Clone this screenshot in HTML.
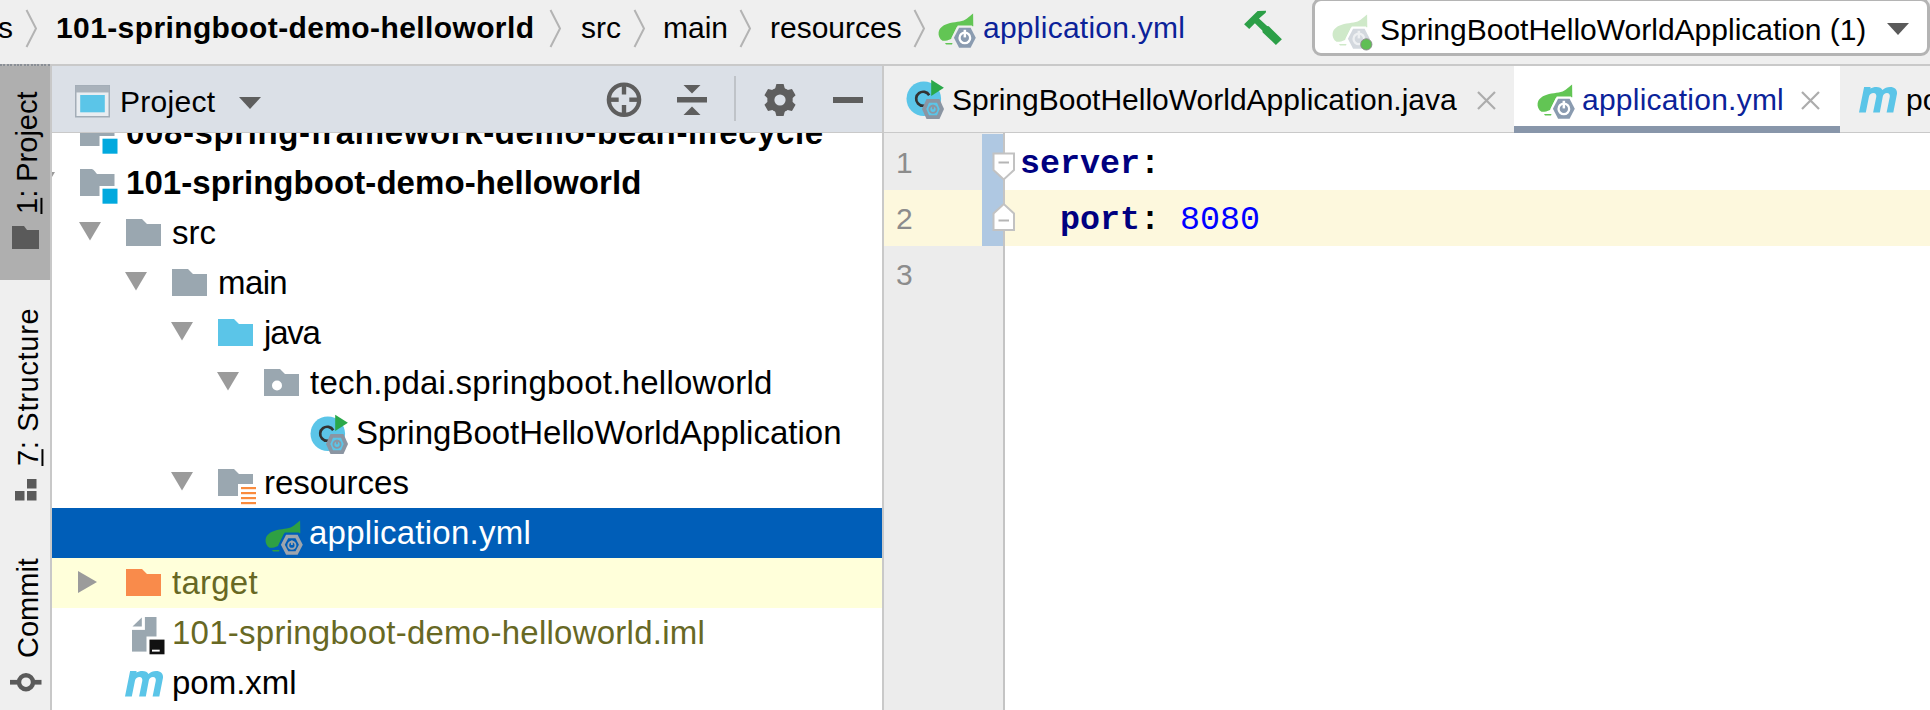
<!DOCTYPE html><html><head><meta charset="utf-8"><style>
html,body{margin:0;padding:0}
body{width:1930px;height:710px;overflow:hidden;position:relative;background:#fff;font-family:"Liberation Sans",sans-serif}
.t{position:absolute;white-space:nowrap}
.r{position:absolute}
.s{position:absolute;overflow:visible}
</style></head><body>
<div class="r" style="left:0px;top:0px;width:1930px;height:64px;background:#efefef;"></div>
<div class="r" style="left:0px;top:64px;width:1930px;height:2px;background:#c9c9c9;"></div>
<div class="t" style="left:-2px;top:12.80px;font-size:30px;line-height:30px;color:#000;font-weight:400;font-family:'Liberation Sans', sans-serif;">s</div>
<svg class="s" style="left:25px;top:9px;" width="13" height="40" viewBox="0 0 13 40"><path d="M1.5 1 L11 19.5 L1.5 38" fill="none" stroke="#b3b3b3" stroke-width="2"/></svg>
<div class="t" style="left:56px;top:12.80px;font-size:30px;line-height:30px;color:#000;font-weight:700;font-family:'Liberation Sans', sans-serif;letter-spacing:0.39px">101-springboot-demo-helloworld</div>
<svg class="s" style="left:549px;top:9px;" width="13" height="40" viewBox="0 0 13 40"><path d="M1.5 1 L11 19.5 L1.5 38" fill="none" stroke="#b3b3b3" stroke-width="2"/></svg>
<div class="t" style="left:581px;top:12.80px;font-size:30px;line-height:30px;color:#000;font-weight:400;font-family:'Liberation Sans', sans-serif;">src</div>
<svg class="s" style="left:633px;top:9px;" width="13" height="40" viewBox="0 0 13 40"><path d="M1.5 1 L11 19.5 L1.5 38" fill="none" stroke="#b3b3b3" stroke-width="2"/></svg>
<div class="t" style="left:663px;top:12.80px;font-size:30px;line-height:30px;color:#000;font-weight:400;font-family:'Liberation Sans', sans-serif;">main</div>
<svg class="s" style="left:739px;top:9px;" width="13" height="40" viewBox="0 0 13 40"><path d="M1.5 1 L11 19.5 L1.5 38" fill="none" stroke="#b3b3b3" stroke-width="2"/></svg>
<div class="t" style="left:770px;top:12.80px;font-size:30px;line-height:30px;color:#000;font-weight:400;font-family:'Liberation Sans', sans-serif;">resources</div>
<svg class="s" style="left:913px;top:9px;" width="13" height="40" viewBox="0 0 13 40"><path d="M1.5 1 L11 19.5 L1.5 38" fill="none" stroke="#b3b3b3" stroke-width="2"/></svg>
<svg class="s" style="left:938px;top:13px;" width="42" height="38" viewBox="0 0 42 38"><path d="M4.5 27.8 C1.5 26 0.2 22.5 0.6 19.5 C1.2 14.5 6 11.5 12 10 C19 8.5 25 8.8 29 5.5 C31.5 3.5 33.5 1.8 35.1 0.6 L35.3 13.3 L19 13.8 L13 26 C10 27.5 7 28 4.5 27.8 Z" fill="#62c554"/><path d="M7 30 H14.5 L14 31.6 H8 Z" fill="#62c554"/><path d="M13.6 24.75 L19.8 12.6 H33.9 L40.1 24.75 L33.9 36.9 H19.8 Z" fill="#efefef"/><path d="M15.9 24.75 L21.1 14.8 H32.6 L37.8 24.75 L32.6 34.7 H21.1 Z" fill="#8a9bb0"/><circle cx="26.85" cy="24.9" r="5.3" fill="none" stroke="#fff" stroke-width="2.3"/><rect x="25.6" y="16.8" width="2.5" height="7.6" fill="#fff"/></svg>
<div class="t" style="left:983px;top:12.80px;font-size:30px;line-height:30px;color:#0b2299;font-weight:400;font-family:'Liberation Sans', sans-serif;letter-spacing:0.25px">application.yml</div>
<svg class="s" style="left:1238px;top:4px;" width="46" height="44" viewBox="0 0 46 44"><path d="M6.1 20.3 L19.6 7.1 L28.1 6.8 L27.7 8.8 L21 14.5 L29.1 22 L30.8 22.3 L43.9 35.2 L37.9 40.9 L24.7 28.4 L24.3 26.4 L16.9 19.3 L11.2 25 Z" fill="#2c9f47"/></svg>
<div class="r" style="left:1312px;top:-2px;width:612px;height:52px;border:3px solid #b4b4b4;border-radius:9px;background:#fff"></div>
<svg class="s" style="left:1332px;top:13.5px;" width="42" height="38" viewBox="0 0 42 38"><path d="M4.5 27.8 C1.5 26 0.2 22.5 0.6 19.5 C1.2 14.5 6 11.5 12 10 C19 8.5 25 8.8 29 5.5 C31.5 3.5 33.5 1.8 35.1 0.6 L35.3 13.3 L19 13.8 L13 26 C10 27.5 7 28 4.5 27.8 Z" fill="#cfe9c9"/><path d="M7 30 H14.5 L14 31.6 H8 Z" fill="#cfe9c9"/><path d="M13.6 24.75 L19.8 12.6 H33.9 L40.1 24.75 L33.9 36.9 H19.8 Z" fill="#fff"/><path d="M15.9 24.75 L21.1 14.8 H32.6 L37.8 24.75 L32.6 34.7 H21.1 Z" fill="#d3d8de"/><circle cx="26.85" cy="24.9" r="5.3" fill="none" stroke="#eef0f2" stroke-width="2.3"/><rect x="25.6" y="16.8" width="2.5" height="7.6" fill="#eef0f2"/><circle cx="34.3" cy="30.4" r="5.6" fill="#5fbf55" stroke="#8c8c8c" stroke-width="1"/></svg>
<div class="t" style="left:1380px;top:14.90px;font-size:30px;line-height:30px;color:#000;font-weight:400;font-family:'Liberation Sans', sans-serif;">SpringBootHelloWorldApplication (1)</div>
<svg class="s" style="left:1887px;top:23px;" width="23" height="13" viewBox="0 0 23 13"><path d="M0 0 H22 L11 12 Z" fill="#5a5a5a"/></svg>
<div class="r" style="left:52px;top:558px;width:830px;height:50px;background:#ffffda;"></div>
<div class="r" style="left:52px;top:508px;width:830px;height:50px;background:#005eb8;"></div>
<svg class="s" style="left:80px;top:119px;" width="38" height="35" viewBox="0 0 38 35"><path d="M0 0 H11 C13 0 14 1 17 5 H34.5 V17 H19.5 V27 H0 Z" fill="#9aa7b0"/><rect x="22.5" y="19.7" width="15" height="15" fill="#01a9de"/></svg>
<div class="t" style="left:126px;top:116.06px;font-size:33px;line-height:33px;color:#000;font-weight:700;font-family:'Liberation Sans', sans-serif;letter-spacing:0.62px">008-spring-framework-demo-bean-lifecycle</div>
<svg class="s" style="left:33px;top:172px;" width="22" height="19" viewBox="0 0 22 19"><path d="M0 0 H22 L11.0 18.5 Z" fill="#9b9b9b"/></svg>
<svg class="s" style="left:80px;top:169px;" width="38" height="35" viewBox="0 0 38 35"><path d="M0 0 H11 C13 0 14 1 17 5 H34.5 V17 H19.5 V27 H0 Z" fill="#9aa7b0"/><rect x="22.5" y="19.7" width="15" height="15" fill="#01a9de"/></svg>
<div class="t" style="left:126px;top:166.06px;font-size:33px;line-height:33px;color:#000;font-weight:700;font-family:'Liberation Sans', sans-serif;letter-spacing:0.07px">101-springboot-demo-helloworld</div>
<svg class="s" style="left:79px;top:222px;" width="22" height="19" viewBox="0 0 22 19"><path d="M0 0 H22 L11.0 18.5 Z" fill="#9b9b9b"/></svg>
<svg class="s" style="left:126px;top:219px;" width="35" height="27" viewBox="0 0 35 27"><path d="M0 0 H16 L21 5 H35 V27 H0 Z" fill="#9aa7b0"/></svg>
<div class="t" style="left:172px;top:216.06px;font-size:33px;line-height:33px;color:#000;font-weight:400;font-family:'Liberation Sans', sans-serif;letter-spacing:0px">src</div>
<svg class="s" style="left:125px;top:272px;" width="22" height="19" viewBox="0 0 22 19"><path d="M0 0 H22 L11.0 18.5 Z" fill="#9b9b9b"/></svg>
<svg class="s" style="left:172px;top:269px;" width="35" height="27" viewBox="0 0 35 27"><path d="M0 0 H16 L21 5 H35 V27 H0 Z" fill="#9aa7b0"/></svg>
<div class="t" style="left:218px;top:266.06px;font-size:33px;line-height:33px;color:#000;font-weight:400;font-family:'Liberation Sans', sans-serif;letter-spacing:-0.6px">main</div>
<svg class="s" style="left:171px;top:322px;" width="22" height="19" viewBox="0 0 22 19"><path d="M0 0 H22 L11.0 18.5 Z" fill="#9b9b9b"/></svg>
<svg class="s" style="left:218px;top:319px;" width="35" height="27" viewBox="0 0 35 27"><path d="M0 0 H16 L21 5 H35 V27 H0 Z" fill="#5bc5e8"/></svg>
<div class="t" style="left:264px;top:316.06px;font-size:33px;line-height:33px;color:#000;font-weight:400;font-family:'Liberation Sans', sans-serif;letter-spacing:-1.2px">java</div>
<svg class="s" style="left:217px;top:372px;" width="22" height="19" viewBox="0 0 22 19"><path d="M0 0 H22 L11.0 18.5 Z" fill="#9b9b9b"/></svg>
<svg class="s" style="left:264px;top:369px;" width="35" height="27" viewBox="0 0 35 27"><path d="M0 0 H16 L21 5 H35 V27 H0 Z" fill="#9aa7b0"/><circle cx="13" cy="16.5" r="5" fill="#fff"/></svg>
<div class="t" style="left:310px;top:366.06px;font-size:33px;line-height:33px;color:#000;font-weight:400;font-family:'Liberation Sans', sans-serif;letter-spacing:0.25px">tech.pdai.springboot.helloworld</div>
<svg class="s" style="left:310px;top:415px;" width="40" height="41" viewBox="0 0 40 41"><circle cx="17.8" cy="18.8" r="17.3" fill="#5bc5e8"/><path d="M23.2 15.2 A7 7 0 1 0 22.4 23.4" fill="none" stroke="#333" stroke-width="2.7"/><path d="M25.2 -0.3 L37.9 7.8 L25.2 15.9 Z" fill="#2aa84a"/><path d="M16 29 L20.5 19 H33.5 L38 29 L33.5 39 H20.5 Z" fill="#8b95a2"/><path d="M20.3 29 L23 22.8 H31 L33.7 29 L31 35.2 H23 Z" fill="#5bc5e8"/><circle cx="27" cy="29.3" r="3.6" fill="none" stroke="#8b95a2" stroke-width="1.9"/><rect x="26.05" y="24.8" width="1.9" height="4.5" fill="#8b95a2"/></svg>
<div class="t" style="left:356px;top:416.06px;font-size:33px;line-height:33px;color:#000;font-weight:400;font-family:'Liberation Sans', sans-serif;letter-spacing:0px">SpringBootHelloWorldApplication</div>
<svg class="s" style="left:171px;top:472px;" width="22" height="19" viewBox="0 0 22 19"><path d="M0 0 H22 L11.0 18.5 Z" fill="#9b9b9b"/></svg>
<svg class="s" style="left:218px;top:469px;" width="39" height="36" viewBox="0 0 39 36"><path d="M0 0 H16 L21 5 H35 V15 H20 V27 H0 Z" fill="#9aa7b0"/><rect x="23" y="18" width="15" height="2.2" fill="#f98b3e"/><rect x="23" y="23" width="15" height="2.2" fill="#f98b3e"/><rect x="23" y="28" width="15" height="2.2" fill="#f98b3e"/><rect x="23" y="33" width="15" height="2.2" fill="#f98b3e"/></svg>
<div class="t" style="left:264px;top:466.06px;font-size:33px;line-height:33px;color:#000;font-weight:400;font-family:'Liberation Sans', sans-serif;letter-spacing:0px">resources</div>
<svg class="s" style="left:264.5px;top:519.5px;" width="42" height="38" viewBox="0 0 42 38"><path d="M4.5 27.8 C1.5 26 0.2 22.5 0.6 19.5 C1.2 14.5 6 11.5 12 10 C19 8.5 25 8.8 29 5.5 C31.5 3.5 33.5 1.8 35.1 0.6 L35.3 13.3 L19 13.8 L13 26 C10 27.5 7 28 4.5 27.8 Z" fill="#2ea043"/><path d="M7 30 H14.5 L14 31.6 H8 Z" fill="#2ea043"/><path d="M13.6 24.75 L19.8 12.6 H33.9 L40.1 24.75 L33.9 36.9 H19.8 Z" fill="#005eb8"/><path d="M15.9 24.75 L21.1 14.8 H32.6 L37.8 24.75 L32.6 34.7 H21.1 Z" fill="#9ea5ad"/><path d="M19.8 24.75 L23.2 18.3 H30.5 L33.9 24.75 L30.5 31.2 H23.2 Z" fill="#005eb8"/><circle cx="26.85" cy="25.2" r="3.6" fill="none" stroke="#9ea5ad" stroke-width="1.9"/><rect x="25.9" y="20.5" width="1.9" height="4.5" fill="#9ea5ad"/></svg>
<div class="t" style="left:309px;top:516.06px;font-size:33px;line-height:33px;color:#fff;font-weight:400;font-family:'Liberation Sans', sans-serif;letter-spacing:0.25px">application.yml</div>
<svg class="s" style="left:78px;top:571px;" width="19" height="22" viewBox="0 0 19 22"><path d="M0 0 L19 11.0 L0 22 Z" fill="#9b9b9b"/></svg>
<svg class="s" style="left:126px;top:569px;" width="35" height="27" viewBox="0 0 35 27"><path d="M0 0 H16 L21 5 H35 V27 H0 Z" fill="#f98b4b"/></svg>
<div class="t" style="left:172px;top:566.06px;font-size:33px;line-height:33px;color:#676824;font-weight:400;font-family:'Liberation Sans', sans-serif;letter-spacing:0.25px">target</div>
<svg class="s" style="left:131.5px;top:616.5px;" width="34" height="38" viewBox="0 0 34 38"><path d="M0.5 9.4 L9.8 0.5 V9.4 Z" fill="#9aa7b0"/><rect x="12.9" y="0" width="11.6" height="19.5" fill="#9aa7b0"/><rect x="0" y="12.9" width="14.5" height="21.7" fill="#9aa7b0"/><rect x="17.5" y="22.6" width="15" height="14.7" fill="#111"/><rect x="20" y="32.7" width="7.7" height="1.9" fill="#fff"/></svg>
<div class="t" style="left:172px;top:616.06px;font-size:33px;line-height:33px;color:#676824;font-weight:400;font-family:'Liberation Sans', sans-serif;letter-spacing:0.25px">101-springboot-demo-helloworld.iml</div>
<svg class="s" style="left:125px;top:671px;" width="39" height="27" viewBox="0 0 39 27"><path d="M0 25.6 L5.1 0 L11.6 0 L11.3 1.6 C13 0.5 15 0 17.3 0 C20.5 0 22.5 1.2 23.4 3 C25.5 1 28.2 0 31 0 C35.5 0 38.5 2.5 38 6.8 L34.3 25.6 L27.6 25.6 L30.8 9.8 C31.1 7.8 30 6.1 28 6.1 C25.8 6.1 24.3 7.5 23.8 9.5 L20.8 25.6 L14.1 25.6 L17.3 9.8 C17.6 7.8 16.5 6.1 14.5 6.1 C12.3 6.1 10.5 7.5 10 9.6 L6.8 25.6 Z" fill="#5bc5e8"/></svg>
<div class="t" style="left:172px;top:666.06px;font-size:33px;line-height:33px;color:#000;font-weight:400;font-family:'Liberation Sans', sans-serif;letter-spacing:0px">pom.xml</div>
<div class="r" style="left:0px;top:66px;width:50px;height:644px;background:#efefef;"></div>
<div class="r" style="left:0px;top:66px;width:50px;height:214px;background:#afafaf;"></div>
<div class="r" style="left:0;top:64px;width:50px;height:2px;background:repeating-linear-gradient(90deg,#8a8f96 0 2px,#b5b5b5 2px 3.4px)"></div>
<div class="r" style="left:50px;top:65px;width:2px;height:645px;background:#c8c8c8;"></div>
<div class="t" style="left:38px;top:214px;font-size:29px;line-height:29px;color:#000;transform-origin:0 0;transform:rotate(-90deg) translate(0,-24.55px);"><u style="text-decoration-thickness:2px;text-underline-offset:3px">1</u>: Project</div>
<div class="t" style="left:38.5px;top:466px;font-size:29px;line-height:29px;color:#000;transform-origin:0 0;transform:rotate(-90deg) translate(0,-24.55px);letter-spacing:0.7px"><u style="text-decoration-thickness:2px;text-underline-offset:3px">7</u>: Structure</div>
<div class="t" style="left:38.5px;top:658px;font-size:29px;line-height:29px;color:#000;transform-origin:0 0;transform:rotate(-90deg) translate(0,-24.55px);">Commit</div>
<svg class="s" style="left:12px;top:226px;" width="28" height="23" viewBox="0 0 28 23"><path d="M0 0 H12 L15 4 H27 V23 H0 Z" fill="#5a5a5a"/></svg>
<svg class="s" style="left:15px;top:479px;" width="23" height="22" viewBox="0 0 23 22"><rect x="12" y="0" width="9.5" height="9.5" fill="#5a5a5a"/><rect x="0" y="12" width="9.5" height="9.5" fill="#5a5a5a"/><rect x="12" y="12" width="9.5" height="9.5" fill="#5a5a5a"/></svg>
<svg class="s" style="left:10px;top:672px;" width="33" height="21" viewBox="0 0 33 21"><circle cx="16" cy="10.2" r="7" fill="none" stroke="#5a5a5a" stroke-width="4.4"/><rect x="0" y="7.9" width="8" height="4.7" fill="#5a5a5a"/><rect x="24" y="7.9" width="7.5" height="4.7" fill="#5a5a5a"/></svg>
<div class="r" style="left:52px;top:66px;width:830px;height:66px;background:#dbe0e7;"></div>
<div class="r" style="left:52px;top:132px;width:830px;height:1px;background:#c9c9c9;"></div>
<svg class="s" style="left:74.5px;top:85px;" width="36" height="34" viewBox="0 0 36 34"><rect x="0.75" y="0.75" width="33.5" height="31" fill="#e9edf1" stroke="#a3adb7" stroke-width="1.5"/><rect x="0.75" y="0.75" width="33.5" height="6.7" fill="#a9b2bb"/><rect x="5.2" y="10" width="24.6" height="17.3" fill="#5bc5e8"/></svg>
<div class="t" style="left:120px;top:86.60px;font-size:30px;line-height:30px;color:#000;font-weight:400;font-family:'Liberation Sans', sans-serif;letter-spacing:0.3px">Project</div>
<svg class="s" style="left:239px;top:97px;" width="22" height="13" viewBox="0 0 22 13"><path d="M0 0 H22 L11 12 Z" fill="#5e5e5e"/></svg>
<svg class="s" style="left:604px;top:80px;" width="40" height="40" viewBox="0 0 40 40"><circle cx="20" cy="19.7" r="15.2" fill="none" stroke="#5e5e5e" stroke-width="4.2"/><rect x="17.8" y="5" width="4.4" height="9.5" fill="#5e5e5e"/><rect x="17.8" y="25" width="4.4" height="9.5" fill="#5e5e5e"/><rect x="5" y="17.5" width="9.7" height="4.4" fill="#5e5e5e"/><rect x="25.3" y="17.5" width="9.7" height="4.4" fill="#5e5e5e"/></svg>
<svg class="s" style="left:677px;top:84px;" width="31" height="32" viewBox="0 0 31 32"><path d="M6.5 1 H23.5 L15 9.5 Z" fill="#5e5e5e"/><rect x="0" y="13" width="30" height="5.5" fill="#5e5e5e"/><path d="M6.5 31 H23.5 L15 22.5 Z" fill="#5e5e5e"/></svg>
<div class="r" style="left:734px;top:76px;width:2px;height:45px;background:#bfc3c8;"></div>
<svg class="s" style="left:758px;top:77.7px;" width="44" height="44" viewBox="0 0 44 44"><circle cx="22" cy="22" r="12.4" fill="#5e5e5e"/><path d="M17.20 10.40 L18.40 6.10 L25.60 6.10 L26.80 10.40 L29.65 12.04 L33.97 10.93 L37.57 17.17 L34.45 20.36 L34.45 23.64 L37.57 26.83 L33.97 33.07 L29.65 31.96 L26.80 33.60 L25.60 37.90 L18.40 37.90 L17.20 33.60 L14.35 31.96 L10.03 33.07 L6.43 26.83 L9.55 23.64 L9.55 20.36 L6.43 17.17 L10.03 10.93 L14.35 12.04 Z" fill="#5e5e5e"/><circle cx="22" cy="22" r="5.6" fill="#dbe0e7"/></svg>
<div class="r" style="left:833px;top:97px;width:30px;height:5.5px;background:#5e5e5e;"></div>
<div class="r" style="left:882px;top:65px;width:2px;height:645px;background:#c9c9c9;"></div>
<div class="r" style="left:884px;top:66px;width:1046px;height:66px;background:#efefef;"></div>
<div class="r" style="left:884px;top:132px;width:1046px;height:1px;background:#c9c9c9;"></div>
<svg class="s" style="left:906px;top:80px;" width="40" height="41" viewBox="0 0 40 41"><circle cx="17.8" cy="18.8" r="17.3" fill="#5bc5e8"/><path d="M23.2 15.2 A7 7 0 1 0 22.4 23.4" fill="none" stroke="#333" stroke-width="2.7"/><path d="M25.2 -0.3 L37.9 7.8 L25.2 15.9 Z" fill="#2aa84a"/><path d="M16 29 L20.5 19 H33.5 L38 29 L33.5 39 H20.5 Z" fill="#8b95a2"/><path d="M20.3 29 L23 22.8 H31 L33.7 29 L31 35.2 H23 Z" fill="#5bc5e8"/><circle cx="27" cy="29.3" r="3.6" fill="none" stroke="#8b95a2" stroke-width="1.9"/><rect x="26.05" y="24.8" width="1.9" height="4.5" fill="#8b95a2"/></svg>
<div class="t" style="left:952px;top:85.20px;font-size:30px;line-height:30px;color:#000;font-weight:400;font-family:'Liberation Sans', sans-serif;">SpringBootHelloWorldApplication.java</div>
<svg class="s" style="left:1477px;top:90.5px;" width="19" height="19" viewBox="0 0 19 19"><path d="M1 1 L18 18 M18 1 L1 18" stroke="#acacac" stroke-width="2.2"/></svg>
<div class="r" style="left:1514px;top:66px;width:326px;height:66px;background:#fff;"></div>
<div class="r" style="left:1514px;top:126px;width:326px;height:7px;background:#8896aa;"></div>
<svg class="s" style="left:1536.5px;top:84px;" width="42" height="38" viewBox="0 0 42 38"><path d="M4.5 27.8 C1.5 26 0.2 22.5 0.6 19.5 C1.2 14.5 6 11.5 12 10 C19 8.5 25 8.8 29 5.5 C31.5 3.5 33.5 1.8 35.1 0.6 L35.3 13.3 L19 13.8 L13 26 C10 27.5 7 28 4.5 27.8 Z" fill="#62c554"/><path d="M7 30 H14.5 L14 31.6 H8 Z" fill="#62c554"/><path d="M13.6 24.75 L19.8 12.6 H33.9 L40.1 24.75 L33.9 36.9 H19.8 Z" fill="#fff"/><path d="M15.9 24.75 L21.1 14.8 H32.6 L37.8 24.75 L32.6 34.7 H21.1 Z" fill="#8a9bb0"/><circle cx="26.85" cy="24.9" r="5.3" fill="none" stroke="#fff" stroke-width="2.3"/><rect x="25.6" y="16.8" width="2.5" height="7.6" fill="#fff"/></svg>
<div class="t" style="left:1582px;top:85.20px;font-size:30px;line-height:30px;color:#0b2299;font-weight:400;font-family:'Liberation Sans', sans-serif;letter-spacing:0.24px">application.yml</div>
<svg class="s" style="left:1801px;top:90.5px;" width="19" height="19" viewBox="0 0 19 19"><path d="M1 1 L18 18 M18 1 L1 18" stroke="#acacac" stroke-width="2.2"/></svg>
<svg class="s" style="left:1859px;top:87px;" width="39" height="27" viewBox="0 0 39 27"><path d="M0 25.6 L5.1 0 L11.6 0 L11.3 1.6 C13 0.5 15 0 17.3 0 C20.5 0 22.5 1.2 23.4 3 C25.5 1 28.2 0 31 0 C35.5 0 38.5 2.5 38 6.8 L34.3 25.6 L27.6 25.6 L30.8 9.8 C31.1 7.8 30 6.1 28 6.1 C25.8 6.1 24.3 7.5 23.8 9.5 L20.8 25.6 L14.1 25.6 L17.3 9.8 C17.6 7.8 16.5 6.1 14.5 6.1 C12.3 6.1 10.5 7.5 10 9.6 L6.8 25.6 Z" fill="#5bc5e8"/></svg>
<div class="t" style="left:1906px;top:85.20px;font-size:30px;line-height:30px;color:#000;font-weight:400;font-family:'Liberation Sans', sans-serif;">pom.xml</div>
<div class="r" style="left:884px;top:133px;width:1046px;height:577px;background:#fff;"></div>
<div class="r" style="left:884px;top:133px;width:120px;height:577px;background:#ececec;"></div>
<div class="r" style="left:884px;top:190px;width:98px;height:56px;background:#fdf8dd;"></div>
<div class="r" style="left:1005px;top:190px;width:925px;height:56px;background:#fdf8dd;"></div>
<div class="r" style="left:982px;top:134px;width:22px;height:112px;background:#afc8e2;"></div>
<div class="r" style="left:1003px;top:133px;width:2px;height:577px;background:#c4c4c4;"></div>
<div class="t" style="left:896px;top:148.40px;font-size:30px;line-height:30px;color:#8c8c8c;font-weight:400;font-family:'Liberation Sans', sans-serif;">1</div>
<div class="t" style="left:896px;top:204.40px;font-size:30px;line-height:30px;color:#8c8c8c;font-weight:400;font-family:'Liberation Sans', sans-serif;">2</div>
<div class="t" style="left:896px;top:260.40px;font-size:30px;line-height:30px;color:#8c8c8c;font-weight:400;font-family:'Liberation Sans', sans-serif;">3</div>
<svg class="s" style="left:992px;top:152px;" width="24" height="30" viewBox="0 0 24 30"><path d="M1.5 1.5 H22 V18 L11.75 27.5 L1.5 18 Z" fill="#fff" stroke="#c2c2c2" stroke-width="2"/><rect x="6.5" y="9.5" width="10.5" height="2" fill="#b5b5b5"/></svg>
<svg class="s" style="left:992px;top:202px;" width="24" height="30" viewBox="0 0 24 30"><path d="M1.5 28 H22 V11.5 L11.75 2 L1.5 11.5 Z" fill="#fff" stroke="#c2c2c2" stroke-width="2"/><rect x="6.5" y="17.5" width="10.5" height="2" fill="#b5b5b5"/></svg>
<div class="t" style="left:1020px;top:148.47px;font-size:33.33px;line-height:33.33px;color:#000;font-weight:700;font-family:'Liberation Mono', monospace;"><span style="color:#000080">server</span>:</div>
<div class="t" style="left:1020px;top:204.27px;font-size:33.33px;line-height:33.33px;color:#000;font-weight:700;font-family:'Liberation Mono', monospace;">&nbsp;&nbsp;<span style="color:#000080">port</span>: <span style="color:#0000ff;font-weight:400">8080</span></div>
</body></html>
